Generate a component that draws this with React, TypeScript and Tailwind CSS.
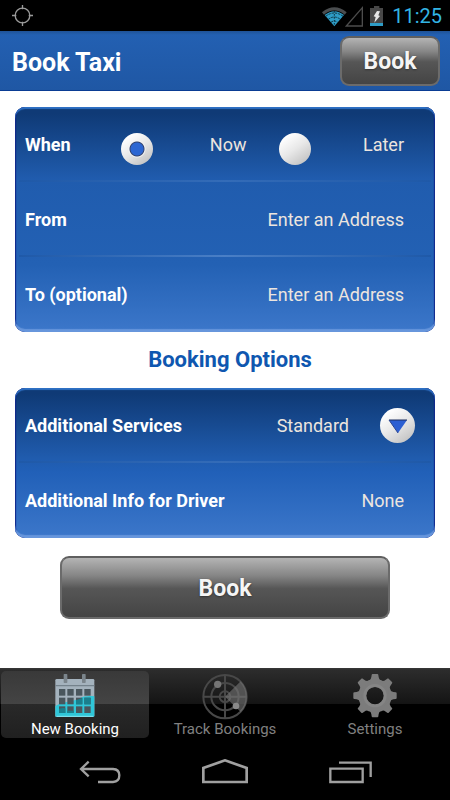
import { useState } from "react";
import type { ReactNode } from "react";
import clsx from "clsx";

const rowClass = "flex h-[75px] items-center pl-[10px] pr-[31px]";
const labelClass = "text-lg font-bold text-white";
const valueClass =
  "text-lg text-[#ece5df] placeholder:text-[#ece5df] placeholder:opacity-100";
const glossyButton =
  "cursor-pointer rounded-[9px] border-2 border-[#6b6b6b] border-t-[#5f5f5f] bg-linear-[180deg,#b4b4b4_0%,#858585_30%,#565656_52%,#444444_100%] pt-1 text-[23px] font-bold text-[#f5f5f5] [text-shadow:0_1px_2px_#333]";
const radioClass =
  "mt-2 size-8 shrink-0 cursor-pointer appearance-none rounded-full bg-linear-[145deg,#ffffff_15%,#e8e8e8_50%,#b8b8b8_100%] checked:bg-[radial-gradient(circle,#2c66d2_0,#2c66d2_6px,#33436e_7px,#f4f4f4_8px,transparent_9px),linear-gradient(145deg,#ffffff_15%,#e8e8e8_50%,#b8b8b8_100%)]";

function StatusBar() {
  return (
    <div className="flex h-[31px] items-center justify-between bg-black pl-3 pr-2">
      <svg viewBox="36 15 63 63" className="size-[21px]" fill="none" stroke="#9a9a9a">
        <circle cx="67.500" cy="46.500" r="22" strokeWidth="4" />
        <path d="M67.500 15v13M67.500 65v13M36 46.500h13M86 46.500h13" strokeWidth="4" />
      </svg>
      <div className="flex items-center">
        <svg viewBox="294 12 186 66" className="h-[22px] w-[62px]">
          <path d="M294 34Q331 4 368 34L362 41Q331 16 300 41Z" fill="#4a4d4f" />
          <path d="M302 42Q331 19 360 42L331 76Z" fill="#2e9cc6" />
          <path
            d="M305 46Q331 26 357 46M313 55Q331 41 349 55M321 64Q331 56 341 64"
            fill="none"
            stroke="#0e3442"
            strokeWidth="3"
            strokeDasharray="7 3"
          />
          <path d="M331 30v44" stroke="#0e3442" strokeWidth="3" strokeDasharray="5 4" />
          <path d="M367 75L415 20V75Z" fill="none" stroke="#4c4c4c" strokeWidth="4" />
          <path d="M450 15h16v6h11v54h-39v-54h12z" fill="#484848" />
          <path d="M438 66h39v9h-39z" fill="#2e9cc6" />
          <path d="M459 30l9 1-5 12 5 2-17 20 4-17-6-2z" fill="#e6e6e6" />
        </svg>
        <span className="ml-2 text-xl text-[#33b5e5]">11:25</span>
      </div>
    </div>
  );
}

function Panel({ children, tall }: { children: ReactNode; tall?: boolean }) {
  return (
    <section
      className={clsx(
        "mx-[15px] rounded-[10px] shadow-[inset_0_2px_1px_#2e70c4,inset_0_-3px_1px_#6796dc,inset_1px_0_1px_#04107a,inset_-1px_0_1px_#04107a]",
        tall
          ? "bg-linear-[180deg,#0f3a76_3%,#205cae_32%,#2361b4_70%,#3c77ca_100%]"
          : "bg-linear-[180deg,#0f3a76_4%,#205cae_47%,#2160b8_56%,#3c77ca_100%]",
      )}
    >
      {children}
    </section>
  );
}

function Divider({ bright }: { bright?: boolean }) {
  return (
    <div
      className={clsx(
        "mx-1 -mt-[2px] h-[2px]",
        bright
          ? "bg-linear-[90deg,#1f59a8_0%,#4a7fc6_50%,#1f59a8_100%]"
          : "bg-linear-[90deg,#1f59a8_0%,#346cb8_50%,#1f59a8_100%]",
      )}
    />
  );
}

function CalendarIcon() {
  return (
    <svg viewBox="156 42 138 138" className="size-[46px] shrink-0">
      <rect x="166" y="57" width="117" height="114" rx="4" fill="#a4b2bd" />
      <path d="M166 75h117v4H166z" fill="#74828c" />
      <path
        d="M166 138C195 122 216 128 238 115C252 108 266 107 283 109V167Q283 171 279 171H170Q166 171 166 167Z"
        fill="#2fc6d8"
      />
      {[177, 202, 228, 253].map((x) =>
        [87, 113, 139].map((y) => (
          <rect key={`${x}-${y}`} x={x} y={y} width="19" height="20" fill="#49565d" />
        )),
      )}
      <path
        d="M177 147Q187 143 196 145V159H177ZM202 152h19v7h-19zM228 121l19-7v19h-19zM253 113h19v20h-19z"
        fill="#197f8d"
      />
      <rect x="191" y="42" width="11" height="27" rx="2" fill="#7b858c" />
      <rect x="246" y="42" width="11" height="27" rx="2" fill="#7b858c" />
      <path d="M170 169h109" stroke="#8be3ee" strokeWidth="3" />
    </svg>
  );
}

function RadarIcon() {
  return (
    <svg viewBox="156 42 138 138" className="size-[46px] shrink-0">
      <g fill="none" stroke="#484848" strokeWidth="6">
        <circle cx="225" cy="110" r="65" />
        <circle cx="225" cy="110" r="41" />
        <circle cx="225" cy="110" r="16" />
        <path d="M225 45v130M160 110h130" />
      </g>
      <path d="M225 110L272 64A66 66 0 0 1 272 156Z" fill="#777777" fillOpacity="0.6" />
      <circle cx="203" cy="73" r="11" fill="#757575" />
      <circle cx="258" cy="138" r="10" fill="#8a8a8a" />
    </svg>
  );
}

function GearIcon() {
  return (
    <svg viewBox="156 42 138 138" className="size-[46px] shrink-0">
      <circle cx="225" cy="107" r="38" fill="none" stroke="#7c7c7c" strokeWidth="24" />
      {[0, 45, 90, 135, 180, 225, 270, 315].map((angle) => (
        <path
          key={angle}
          d="M204 66Q214 60 215 45Q215 42 218 42H232Q235 42 235 45Q236 60 246 66Z"
          fill="#7c7c7c"
          transform={`rotate(${angle} 225 107)`}
        />
      ))}
      <circle cx="225" cy="107" r="31" fill="none" stroke="#858585" strokeWidth="8" />
    </svg>
  );
}

const tabs = [
  { name: "New Booking", icon: <CalendarIcon /> },
  { name: "Track Bookings", icon: <RadarIcon /> },
  { name: "Settings", icon: <GearIcon /> },
];

function TabBar() {
  const [active, setActive] = useState("New Booking");
  return (
    <nav className="flex h-[74px] bg-linear-[180deg,#383838_0,#2c2c2c_2px,#141414_36px,#000000_36px]">
      {tabs.map((tab) => (
        <button
          key={tab.name}
          type="button"
          onClick={() => setActive(tab.name)}
          className={clsx(
            "mx-px mb-1 mt-[3px] flex flex-1 cursor-pointer flex-col items-center rounded-[5px] pt-[3px] text-[15px] leading-[18px]",
            active === tab.name
              ? "bg-linear-[180deg,#393939_0,#444444_33px,#292929_33px,#202020_100%] text-white"
              : "text-[#808080]",
          )}
        >
          {tab.icon}
          {tab.name}
        </button>
      ))}
    </nav>
  );
}

function SystemNav() {
  return (
    <div className="flex h-[58px] items-center bg-black px-[37px]">
      <button type="button" aria-label="Back" className="flex flex-1 justify-center">
        <svg viewBox="237 296 126 75" className="h-[25px] w-[42px]" fill="none" stroke="#a0a0a0" strokeWidth="7">
          <path d="M266 304L243 326L266 348M243 326H339Q358 327 358 345Q358 364 339 365H294" />
        </svg>
      </button>
      <button type="button" aria-label="Home" className="flex flex-1 justify-center">
        <svg viewBox="156 296 138 75" className="h-[25px] w-[46px]" fill="none" stroke="#a0a0a0" strokeWidth="8">
          <path d="M160 365V323L225 300L290 323V365Z" />
        </svg>
      </button>
      <button type="button" aria-label="Recent apps" className="flex flex-1 justify-center">
        <svg viewBox="90 296 129 75" className="h-[25px] w-[43px]" fill="none" stroke="#a0a0a0" strokeWidth="7">
          <path d="M94 325H191V365H94ZM120 307H215V350" />
        </svg>
      </button>
    </div>
  );
}

export default function App() {
  const [when, setWhen] = useState("now");
  return (
    <div className="flex min-h-screen flex-col bg-white font-[Roboto,sans-serif]">
      <StatusBar />
      <header className="flex h-[60px] items-center justify-between border-b border-[#0a3c94] bg-linear-[180deg,#1f5296_0,#2360b2_4px,#1f57a4_100%] pl-3 pr-[10px]">
        <h1 className="pt-1 text-[25px] font-bold text-white">Book Taxi</h1>
        <button type="button" className={clsx(glossyButton, "h-[50px] w-[100px]")}>
          Book
        </button>
      </header>

      <main className="flex flex-1 flex-col pb-6 pt-4">
        <Panel tall>
          <div className={rowClass} role="radiogroup" aria-labelledby="when-label">
            <span id="when-label" className={clsx(labelClass, "w-24")}>
              When
            </span>
            <div className="grid flex-1 grid-cols-2 gap-8">
              <label className={clsx(valueClass, "flex items-center justify-between")}>
                <input
                  type="radio"
                  name="when"
                  className={radioClass}
                  checked={when === "now"}
                  onChange={() => setWhen("now")}
                />
                Now
              </label>
              <label className={clsx(valueClass, "flex items-center justify-between")}>
                <input
                  type="radio"
                  name="when"
                  className={radioClass}
                  checked={when === "later"}
                  onChange={() => setWhen("later")}
                />
                Later
              </label>
            </div>
          </div>
          <Divider />
          <div className={rowClass}>
            <label htmlFor="from" className={labelClass}>
              From
            </label>
            <input
              id="from"
              type="text"
              placeholder="Enter an Address"
              className={clsx(valueClass, "min-w-0 flex-1 text-right outline-none")}
            />
          </div>
          <Divider bright />
          <div className={rowClass}>
            <label htmlFor="to" className={labelClass}>
              To (optional)
            </label>
            <input
              id="to"
              type="text"
              placeholder="Enter an Address"
              className={clsx(valueClass, "min-w-0 flex-1 text-right outline-none")}
            />
          </div>
        </Panel>

        <h2 className="py-3 pl-[10px] text-center text-[22px] leading-8 font-bold text-[#0f57b0]">
          Booking Options
        </h2>

        <Panel>
          <div className="flex h-[75px] items-center pl-[10px] pr-5">
            <label htmlFor="services" className={labelClass}>
              Additional Services
            </label>
            <select
              id="services"
              className={clsx(valueClass, "min-w-0 flex-1 appearance-none outline-none [text-align-last:right]")}
            >
              <option>Standard</option>
            </select>
            <span className="pointer-events-none ml-[31px] flex size-[35px] items-center justify-center rounded-full bg-linear-[145deg,#ffffff_15%,#e8e8e8_50%,#b8b8b8_100%]">
              <svg viewBox="0 0 20 16" className="h-4 w-5">
                <path d="M1 2h18l-9 13z" fill="#2c5fd2" />
                <path d="M1 2h18" stroke="#1d2f60" strokeWidth="1" />
                <path d="M1 2l9 13" stroke="#2a4590" strokeWidth="1" />
              </svg>
            </span>
          </div>
          <Divider />
          <div className={rowClass}>
            <label htmlFor="info" className={labelClass}>
              Additional Info for Driver
            </label>
            <input
              id="info"
              type="text"
              placeholder="None"
              className={clsx(valueClass, "min-w-0 flex-1 text-right outline-none")}
            />
          </div>
        </Panel>

        <button type="button" className={clsx(glossyButton, "mx-[60px] mt-[18px] h-[63px]")}>
          Book
        </button>
      </main>

      <TabBar />
      <SystemNav />
    </div>
  );
}
